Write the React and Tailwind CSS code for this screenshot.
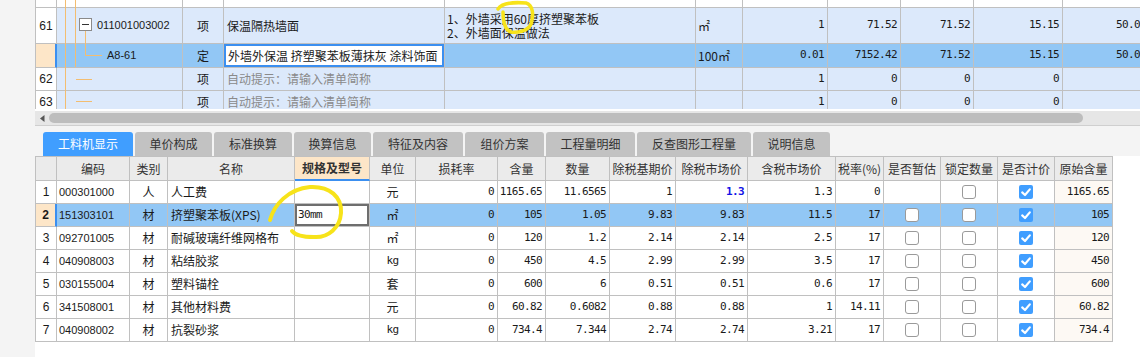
import clsx from "clsx";

const topCols = "grid grid-cols-[21px_126px_41px_221px_251px_47px_85px_73px_73px_89px_88px]";
const botCols =
  "grid grid-cols-[21px_73px_38px_127px_75px_46px_82px_48px_64px_66px_72px_88px_48px_57px_57px_57px_58px]";

const mono = "font-['DejaVu_Sans_Mono',monospace] text-[11px] tracking-[-0.6px]";
const sans = "font-['Liberation_Sans',sans-serif] text-[11px]";

function Cell({ className, children }) {
  return (
    <div
      className={clsx(
        "border-r border-b border-[#c0c0c0] flex items-center overflow-hidden whitespace-nowrap",
        className
      )}
    >
      {children}
    </div>
  );
}

function Num({ className, children }) {
  return <Cell className={clsx("justify-end pr-[3px]", mono, className)}>{children}</Cell>;
}

function Box({ checked }) {
  if (checked) {
    return (
      <span className="w-[14px] h-[14px] rounded-[2px] bg-[#409eff] flex items-center justify-center">
        <svg width="14" height="14" viewBox="0 0 14 14">
          <path d="M3.2 7.4 L6 10 L10.8 4.4" fill="none" stroke="#fff" strokeWidth="2.2" strokeLinecap="round" strokeLinejoin="round" />
        </svg>
      </span>
    );
  }
  return <span className="w-[14px] h-[14px] rounded-[3px] border border-[#9a9a9a] bg-white" />;
}

const tabs = [
  ["工料机显示", "w-[90px]"],
  ["单价构成", "w-[77px]"],
  ["标准换算", "w-[78px]"],
  ["换算信息", "w-[77px]"],
  ["特征及内容", "w-[90px]"],
  ["组价方案", "w-[79px]"],
  ["工程量明细", "w-[89px]"],
  ["反查图形工程量", "w-[114px]"],
  ["说明信息", "w-[77px]"],
];

const heads = [
  "",
  "编码",
  "类别",
  "名称",
  "规格及型号",
  "单位",
  "损耗率",
  "含量",
  "数量",
  "除税基期价",
  "除税市场价",
  "含税市场价",
  "税率(%)",
  "是否暂估",
  "锁定数量",
  "是否计价",
  "原始含量",
];

const items = [
  ["1", "000301000", "人", "人工费", "", "元", "0", "1165.65", "11.6565", "1", "1.3", "1.3", "0", null, false, true, "1165.65"],
  ["2", "151303101", "材", "挤塑聚苯板(XPS)", "30mm", "㎡", "0", "105", "1.05", "9.83", "9.83", "11.5", "17", false, false, true, "105"],
  ["3", "092701005", "材", "耐碱玻璃纤维网格布", "", "㎡", "0", "120", "1.2", "2.14", "2.14", "2.5", "17", false, false, true, "120"],
  ["4", "040908003", "材", "粘结胶浆", "", "kg", "0", "450", "4.5", "2.99", "2.99", "3.5", "17", false, false, true, "450"],
  ["5", "030155004", "材", "塑料锚栓", "", "套", "0", "600", "6", "0.51", "0.51", "0.6", "17", false, false, true, "600"],
  ["6", "341508001", "材", "其他材料费", "", "元", "0", "60.82", "0.6082", "0.88", "0.88", "1", "14.11", false, false, true, "60.82"],
  ["7", "040908002", "材", "抗裂砂浆", "", "kg", "0", "734.4", "7.344", "2.74", "2.74", "3.21", "17", false, false, true, "734.4"],
];

function TopGrid() {
  const blue = "bg-[#dce9fb]";
  const sel = "bg-[#92c7f5]";
  return (
    <div className="relative h-[109px] overflow-hidden border-l border-[#c0c0c0] bg-white">
      <div className={clsx(topCols, "h-[8px]")}>
        {Array.from({ length: 11 }).map((_, i) => (
          <Cell key={i} className="bg-white" />
        ))}
      </div>

      <div className={clsx(topCols, "h-[36px]")}>
        <Cell className="bg-white justify-center font-['Liberation_Sans',sans-serif] text-[12px]">61</Cell>
        <Cell className={clsx(blue, sans, "pl-[40px] text-[11.5px]")}>011001003002</Cell>
        <Cell className={clsx(blue, "justify-center")}>项</Cell>
        <Cell className={clsx(blue, "pl-[3px]")}>保温隔热墙面</Cell>
        <Cell className={clsx(blue, "flex-col items-start justify-center pl-[2px] leading-[14px]")}>
          <span>1、外墙采用60厚挤塑聚苯板</span>
          <span>2、外墙面保温做法</span>
        </Cell>
        <Cell className={clsx(blue, "pl-[2px]")}>㎡</Cell>
        <Num className={blue}>1</Num>
        <Num className={blue}>71.52</Num>
        <Num className={blue}>71.52</Num>
        <Num className={blue}>15.15</Num>
        <Num className={clsx(blue, "pr-[4px]")}>50.02</Num>
      </div>

      <div className={clsx(topCols, "h-[24px]")}>
        <Cell className="bg-[#fde6c8] border-r-2 border-r-[#3b8ff0]" />
        <Cell className={clsx(sel, sans, "pl-[50px] text-[11.5px]")}>A8-61</Cell>
        <Cell className={clsx(sel, "justify-center")}>定</Cell>
        <Cell className={sel}>
          <div className="h-full w-full border-2 border-[#3b8ff0] bg-white flex items-center pl-[2px]">
            外墙外保温 挤塑聚苯板薄抹灰 涂料饰面
          </div>
        </Cell>
        <Cell className={sel} />
        <Cell className={clsx(sel, "pl-[2px]")}>100㎡</Cell>
        <Num className={sel}>0.01</Num>
        <Num className={sel}>7152.42</Num>
        <Num className={sel}>71.52</Num>
        <Num className={sel}>15.15</Num>
        <Num className={clsx(sel, "pr-[4px]")}>50.02</Num>
      </div>

      {["62", "63"].map((n) => (
        <div key={n} className={clsx(topCols, "h-[23px]")}>
          <Cell className="bg-white justify-center font-['Liberation_Sans',sans-serif] text-[12px]">{n}</Cell>
          <Cell className={blue} />
          <Cell className={clsx(blue, "justify-center")}>项</Cell>
          <Cell className={clsx(blue, "pl-[3px] text-[#8a8a8a]")}>自动提示：请输入清单简称</Cell>
          <Cell className={blue} />
          <Cell className={blue} />
          <Num className={blue}>1</Num>
          <Num className={blue}>0</Num>
          <Num className={blue}>0</Num>
          <Num className={blue}>0</Num>
          <Cell className={blue} />
        </div>
      ))}

      <svg className="absolute left-0 top-0 pointer-events-none" width="120" height="109" viewBox="36 0 120 109">
        <g stroke="#f3bd70" strokeWidth="1" fill="none">
          <path d="M65.5 0 V109" />
          <path d="M75.5 0 V67" />
          <path d="M85.5 31 V55.5 H102" />
          <path d="M76 79.5 H92" />
          <path d="M76 101.5 H92" />
        </g>
        <rect x="79.5" y="18.5" width="12" height="12" fill="#fff" stroke="#8a8a8a" />
        <path d="M82 24.5 H89" stroke="#333" strokeWidth="1" />
      </svg>
    </div>
  );
}

function BottomGrid() {
  return (
    <div className="border-l border-t border-[#c0c0c0] w-fit bg-white">
      <div className={clsx(botCols, "h-[24px] bg-[#ebebeb] text-[#333]")}>
        {heads.map((h, i) =>
          i === 4 ? (
            <Cell key={i} className="justify-center bg-[#fde6c8] font-bold border-b-2 border-b-[#3b8ff0]">
              {h}
            </Cell>
          ) : (
            <Cell key={i} className="justify-center">
              {h}
            </Cell>
          )
        )}
      </div>
      {items.map((r) => {
        const on = r[0] === "2";
        const bg = on ? "bg-[#92c7f5]" : "bg-white";
        return (
          <div key={r[0]} className={clsx(botCols, "h-[23px]")}>
            <Cell
              className={clsx(
                "justify-center font-['Liberation_Sans',sans-serif] text-[12px]",
                on ? "bg-[#fde6c8] font-bold border-r-2 border-r-[#3b8ff0]" : "bg-white"
              )}
            >
              {r[0]}
            </Cell>
            <Cell className={clsx(bg, sans, "pl-[2px] text-[11.5px]")}>{r[1]}</Cell>
            <Cell className={clsx(bg, "justify-center")}>{r[2]}</Cell>
            <Cell className={clsx(bg, "pl-[3px]")}>{r[3]}</Cell>
            <Cell className={bg}>
              {r[4] && (
                <div className={clsx("h-full w-full border-2 border-[#6e6e6e] bg-white flex items-center pl-[1px]", mono)}>
                  {r[4]}
                </div>
              )}
            </Cell>
            <Cell className={clsx(bg, "justify-center", r[5] === "kg" && mono)}>{r[5]}</Cell>
            <Num className={bg}>{r[6]}</Num>
            <Num className={bg}>{r[7]}</Num>
            <Num className={bg}>{r[8]}</Num>
            <Num className={bg}>{r[9]}</Num>
            <Num className={clsx(bg, r[0] === "1" && "text-[#1212e6] font-bold")}>{r[10]}</Num>
            <Num className={bg}>{r[11]}</Num>
            <Num className={bg}>{r[12]}</Num>
            <Cell className={clsx(bg, "justify-center")}>{r[13] !== null && <Box checked={r[13]} />}</Cell>
            <Cell className={clsx(bg, "justify-center")}>
              <Box checked={r[14]} />
            </Cell>
            <Cell className={clsx(bg, "justify-center")}>
              <Box checked={r[15]} />
            </Cell>
            <Num className={on ? bg : "bg-[#fdf9f4]"}>{r[16]}</Num>
          </div>
        );
      })}
    </div>
  );
}

export default function App() {
  return (
    <div className="relative w-[1140px] h-[357px] overflow-hidden flex bg-white text-[12px] text-[#1a1a1a] font-['Noto_Sans_CJK_SC',sans-serif]">
      <div className="w-[35px] shrink-0 bg-[#f4f4f4]" />
      <div className="flex-1 min-w-0 flex flex-col">
        <TopGrid />
        <div className="h-[2px] bg-white" />
        <div className="h-[14px] bg-[#e6e6e6] flex items-center">
          <svg className="ml-[5px]" width="5" height="7" viewBox="0 0 5 7">
            <path d="M4.5 0 V7 L0 3.5 Z" fill="#555" />
          </svg>
          <div className="ml-[4px] w-[1034px] h-[10px] rounded-full bg-[#bdbdbd]" />
        </div>
        <div className="h-[1px] bg-[#cfcfcf]" />
        <div className="h-[30px] bg-[#f4f4f4] pt-[6px] pl-[8px] flex gap-[2px]">
          {tabs.map(([t, w], i) => (
            <div
              key={t}
              className={clsx(
                w,
                "h-[24px] rounded-t-[3px] flex items-center justify-center",
                i === 0 ? "bg-[#409eff] text-white" : "bg-[#c2c2c2] text-[#333]"
              )}
            >
              {t}
            </div>
          ))}
        </div>
        <BottomGrid />
        <div className="flex-1 bg-white" />
      </div>

      <svg className="absolute left-0 top-0 pointer-events-none" width="1140" height="357" viewBox="0 0 1140 357">
        <g fill="none" stroke="#f7e31a" strokeLinecap="round" strokeLinejoin="round">
          <path strokeWidth="3.5" d="M498 9 C502 3, 515 2, 526 3 C533 5, 534 15, 531 24 C528 31, 518 33, 511 32 C505 30, 503 22, 503 12" />
          <path strokeWidth="4" d="M270 220 C274 205, 288 189, 310 187 C330 186, 342 197, 341 213 C340 228, 328 238, 314 237 C302 237, 295 235, 292 231" />
        </g>
      </svg>
    </div>
  );
}
